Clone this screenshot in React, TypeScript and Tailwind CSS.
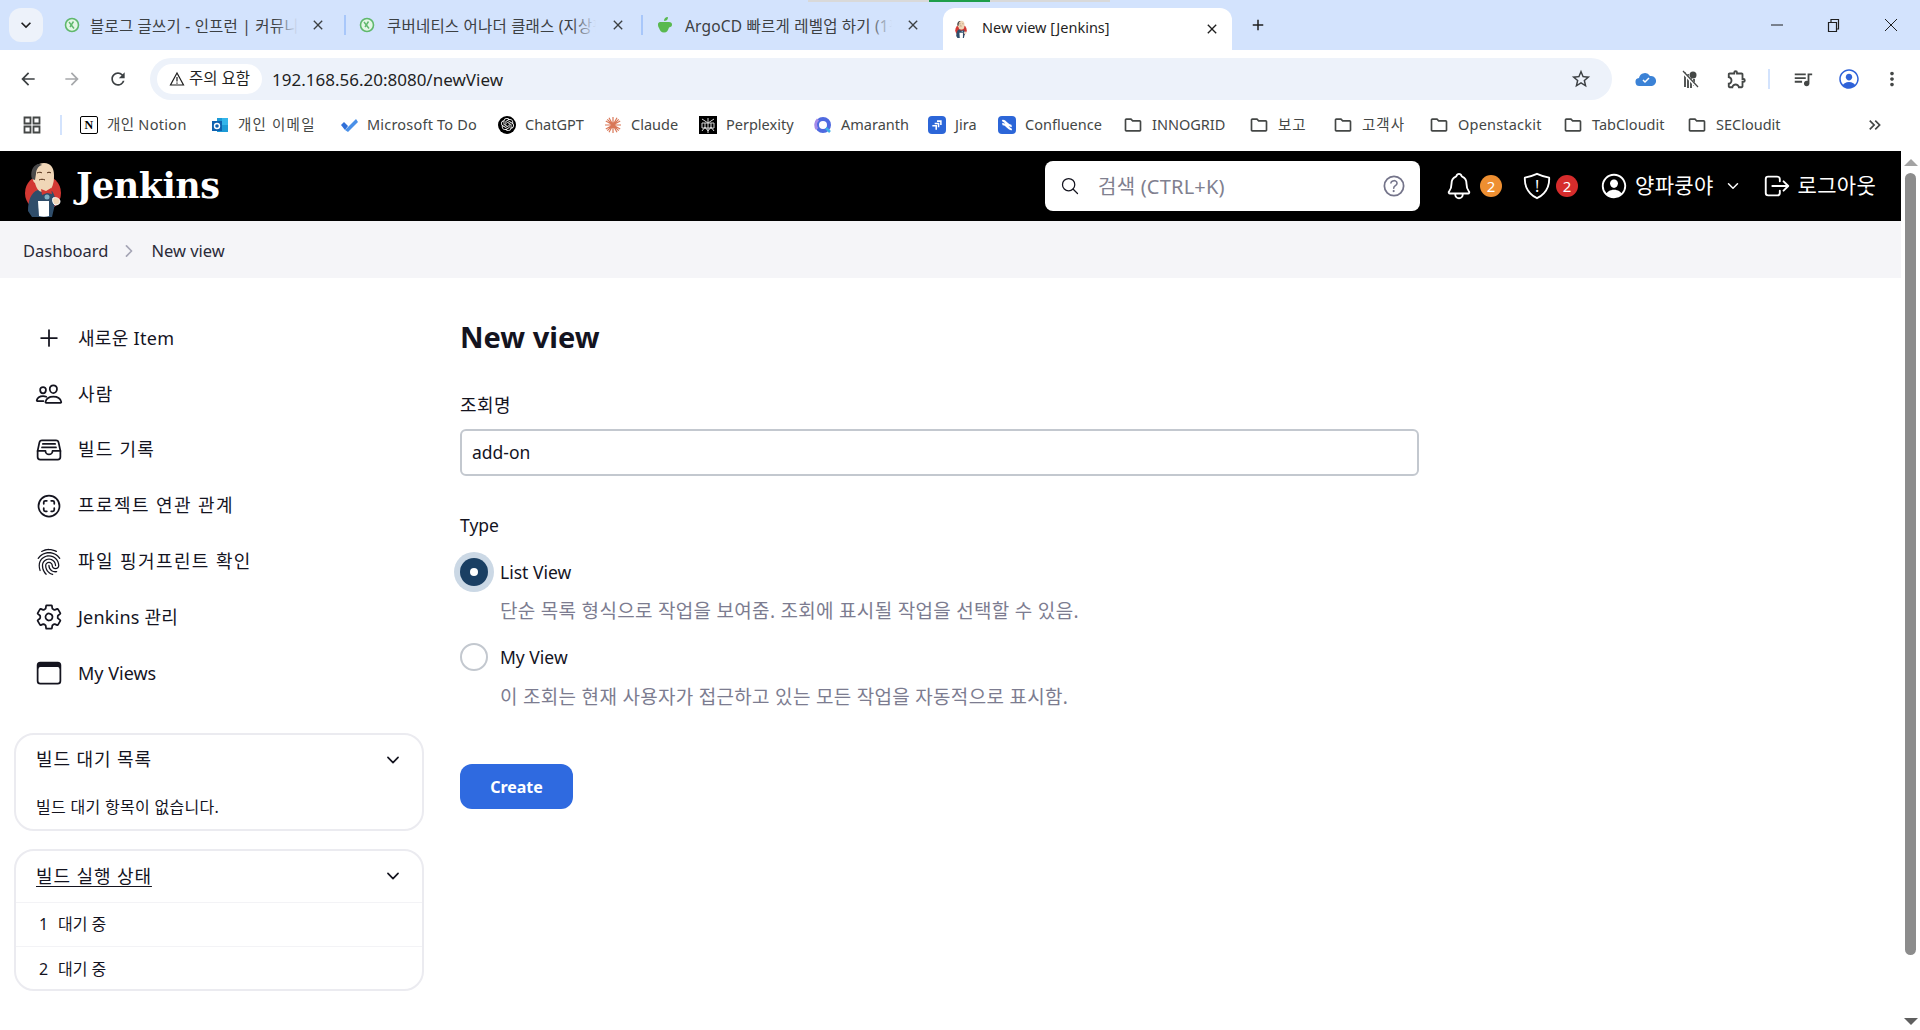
import type { ReactNode } from "react";
import {
  IoAddOutline,
  IoPeopleOutline,
  IoFileTrayFullOutline,
  IoScanCircleOutline,
  IoFingerPrintOutline,
  IoSettingsOutline,
  IoBrowsersOutline,
  IoNotificationsOutline,
  IoShieldOutline,
  IoPersonCircleOutline,
  IoLogOutOutline,
  IoSearchOutline,
  IoHelpCircleOutline,
  IoChevronDown,
  IoChevronForward,
} from "react-icons/io5";
import {
  MdArrowBack,
  MdArrowForward,
  MdRefresh,
  MdStarBorder,
  MdMoreVert,
  MdOutlineExtension,
  MdOutlineFolder,
  MdOutlineQueueMusic,
  MdClose,
  MdAdd,
  MdKeyboardArrowDown,
  MdKeyboardDoubleArrowRight,
} from "react-icons/md";
import { SiOpenai } from "react-icons/si";

function JenkinsLogo({ className }: { className: string }) {
  return (
    <svg viewBox="0 0 50 60" className={className}>
      <circle cx="25" cy="34" r="18" fill="#d33833" />
      <path d="M10 52c0-10 3-19 10-21l14 1c3 4 4 9 3 13l-3 13H14z" fill="#2f4d6a" />
      <path d="M15 14c0-6 5-10 11-10 7 0 10 5 10 12 0 3 0 6-1 9-1 5-5 9-10 8-5 0-7-5-8-9-2-1-3-5-2-10z" fill="#f0d6b7" />
      <path d="M14 20c-2-6 0-13 6-15 2 0 3 0 4 1-4 1-6 5-6 9l-1 6z" fill="#49494a" />
      <path d="M21 21c2-1 4-1 6 0M19 14c2-1 4-1 5 0M29 14c1-1 3-1 4 0" stroke="#49270f" strokeWidth="1" fill="none" />
      <path d="M23 30l5 2 5-3 1 6-5-1-5 2z" fill="#d33833" />
      <path d="M20 42h11v15c-3 1-7 1-10 0z" fill="#fff" />
      <path d="M35 39c3-1 6 0 7 3 0 3-2 4-5 4-2-1-3-5-2-7z" fill="#f0d6b7" stroke="#fff" strokeWidth="1" />
      <circle cx="29" cy="38" r="2.5" fill="#81b0c4" />
    </svg>
  );
}

function InflearnIcon() {
  return (
    <svg viewBox="0 0 16 16" className="w-4 h-4 shrink-0">
      <circle cx="8" cy="8" r="6.5" fill="#e3f6e5" stroke="#5fb86c" strokeWidth="1.6" />
      <path d="M5 5l5 6.5M9.5 4.5L6 10" stroke="#5fb86c" strokeWidth="1.4" fill="none" />
    </svg>
  );
}

function AppleIcon() {
  return (
    <svg viewBox="0 0 18 18" className="w-[18px] h-[18px] shrink-0">
      <path d="M2 8c0-1 1-2 2-2h9c2 0 3 1 3 2.500 0 2-1 2.500-3 3-1 3-2 5-5 5s-4-2-5-4.500C2 11 2 9 2 8z" fill="#59b94f" />
      <path d="M8 5c0-2 1-4 4-4 0 3-2 4-4 4z" fill="#59b94f" />
    </svg>
  );
}

function Tab({ icon, title, gap, titleWidth }: { icon: ReactNode; title: string; gap: string; titleWidth: string }) {
  return (
    <div className={`flex items-center h-full ${gap}`}>
      {icon}
      <div className={`relative overflow-hidden whitespace-nowrap text-[15.5px] tracking-[0.2px] text-[#3c4043] mt-[4px] ${titleWidth}`}>
        {title}
        <span className="absolute inset-y-0 right-0 w-6 bg-gradient-to-r from-transparent to-[#d3e3fd]" />
      </div>
      <MdClose className="w-4 h-4 ml-[2px] text-[#3c4043] shrink-0" />
    </div>
  );
}

function TabStrip() {
  return (
    <div className="relative h-[50px] bg-[#d3e3fd] flex items-center shrink-0">
      <div className="absolute top-0 left-[808px] w-[302px] h-[2px] bg-[#d9d9d9]" />
      <div className="absolute top-0 left-[929px] w-[61px] h-[2px] bg-[#1e9e4a]" />
      <div className="ml-[9px] w-[34px] h-[34px] rounded-[12px] bg-[#edf2fa] flex items-center justify-center shrink-0">
        <MdKeyboardArrowDown className="w-5 h-5 text-[#1f1f1f]" />
      </div>
      <div className="ml-[21px] w-[280px] shrink-0 h-full">
        <Tab icon={<InflearnIcon />} title="블로그 글쓰기 - 인프런 | 커뮤니티" gap="gap-[10px]" titleWidth="w-[208px]" />
      </div>
      <div className="w-[2px] h-[20px] bg-[#a8c7fa] shrink-0" />
      <div className="ml-[13px] w-[282px] shrink-0 h-full">
        <Tab icon={<InflearnIcon />} title="쿠버네티스 어나더 클래스 (지상편)" gap="gap-[12px]" titleWidth="w-[209px]" />
      </div>
      <div className="w-[2px] h-[20px] bg-[#a8c7fa] shrink-0" />
      <div className="ml-[13px] w-[287px] shrink-0 h-full">
        <Tab icon={<AppleIcon />} title="ArgoCD 빠르게 레벨업 하기 (1편)" gap="gap-[11px]" titleWidth="w-[207px]" />
      </div>
      <div className="self-end h-[42px] w-[289px] shrink-0 bg-white rounded-t-[12px] flex items-center pl-[10px]">
        <JenkinsLogo className="w-4 h-5 shrink-0" />
        <span className="ml-[13px] w-[222px] whitespace-nowrap text-[14.5px] text-[#1f1f1f] -mt-[2px]">New view [Jenkins]</span>
        <MdClose className="w-4 h-4 text-[#1f1f1f] shrink-0" />
      </div>
      <MdAdd className="ml-[17px] w-[18px] h-[18px] text-[#1f1f1f] shrink-0" />
      <div className="ml-auto flex items-center text-[#1f1f1f]">
        <svg viewBox="0 0 14 14" className="w-[14px] h-[14px]"><path d="M1 7h12" stroke="currentColor" strokeWidth="1" /></svg>
        <svg viewBox="0 0 14 14" className="ml-[42px] w-[14px] h-[14px]"><path d="M2.500 4.500h8v9h-8zM5 4V1.500h7.500V11H11" stroke="currentColor" fill="none" strokeWidth="1.200" /></svg>
        <svg viewBox="0 0 14 14" className="ml-[44px] mr-[22px] w-[14px] h-[14px]"><path d="M1 1l12 12M13 1L1 13" stroke="currentColor" strokeWidth="1" /></svg>
      </div>
    </div>
  );
}

function Toolbar() {
  return (
    <div className="h-[50px] bg-white flex items-end shrink-0 rounded-t-[10px]">
      <div className="w-[150px] h-[42px] flex items-center shrink-0 text-[#3c4043]">
        <MdArrowBack className="ml-[18px] w-5 h-5" />
        <MdArrowForward className="ml-[24px] w-5 h-5 text-[#a6a8ab]" />
        <MdRefresh className="ml-[26px] w-5 h-5" />
      </div>
      <div className="w-[1462px] h-[42px] rounded-full bg-[#edf2fa] flex items-center shrink-0 pl-[7px] pr-[20px]">
        <div className="w-[105px] h-[30px] rounded-full bg-white flex items-center justify-center gap-[4px] shrink-0">
          <svg viewBox="0 0 16 16" className="w-4 h-4">
            <path d="M8 2l6.500 12h-13zM8 6v4.500M8 11.500v1.200" stroke="#1f1f1f" strokeWidth="1.200" fill="none" />
          </svg>
          <span className="text-[15.5px] text-[#1f1f1f] whitespace-nowrap">주의 요함</span>
        </div>
        <span className="ml-[10px] mt-[1px] text-[17px] text-[#1f1f1f]">192.168.56.20:8080/newView</span>
        <MdStarBorder className="ml-auto w-[22px] h-[22px] text-[#3c4043]" />
      </div>
      <div className="h-[42px] flex items-center text-[#444746]">
        <svg viewBox="0 0 22 16" className="ml-[23px] w-[22px] h-4">
          <path d="M5 15a4 4 0 01-1-8 6 6 0 0111-2 5 5 0 012 10z" fill="#3b82d6" />
          <path d="M8 9l2 2 4-4" stroke="#fff" strokeWidth="1.500" fill="none" />
        </svg>
        <svg viewBox="0 0 20 20" className="ml-[23px] w-5 h-5">
          <circle cx="13" cy="6" r="3.500" fill="#444746" />
          <path d="M5 3v15M8 5v14M11 9v10M14 10v7" stroke="#444746" strokeWidth="1.800" />
          <path d="M2 2l15 16" stroke="#fff" strokeWidth="3" />
          <path d="M3 2l15 16" stroke="#444746" strokeWidth="1.200" />
        </svg>
        <MdOutlineExtension className="ml-[26px] w-[22px] h-[22px]" />
        <div className="ml-[20px] w-[2px] h-[20px] bg-[#d3e3fd]" />
        <MdOutlineQueueMusic className="ml-[22px] w-[22px] h-[22px]" />
        <IoPersonCircleOutline className="ml-[23px] w-[24px] h-[24px] text-[#2f62d8]" />
        <MdMoreVert className="ml-[20px] w-[22px] h-[22px]" />
      </div>
    </div>
  );
}

const BrandSquare = ({ children }: { children: ReactNode }) => (
  <span className="w-[18px] h-[18px] rounded-[4px] bg-[#2c66d8] flex items-center justify-center shrink-0">{children}</span>
);

const bookmarks: { label: string; width: string; icon: ReactNode }[] = [
  {
    label: "개인 Notion",
    width: "w-[131px] tracking-[0.3px]",
    icon: (
      <span className="w-[18px] h-[18px] border-[1.500px] border-black rounded-[2px] bg-white flex items-center justify-center text-[12px] leading-none font-bold font-['Liberation_Serif',serif] text-black shrink-0">N</span>
    ),
  },
  {
    label: "개인 이메일",
    width: "w-[129px] tracking-[1.2px]",
    icon: (
      <svg viewBox="0 0 18 18" className="w-[18px] h-[18px] shrink-0">
        <rect x="6" y="2" width="11" height="14" fill="#1c9ad6" />
        <rect x="11" y="2" width="6" height="7" fill="#33b5ea" />
        <rect x="1" y="5" width="10" height="10" fill="#0f62b0" />
        <circle cx="6" cy="10" r="2.500" fill="none" stroke="#fff" strokeWidth="1.400" />
      </svg>
    ),
  },
  {
    label: "Microsoft To Do",
    width: "w-[158px] tracking-[0.2px]",
    icon: (
      <svg viewBox="0 0 18 18" className="w-[18px] h-[18px] shrink-0">
        <path d="M1 9l3-3 4 4-3 4z" fill="#2f6fd8" />
        <path d="M5 14l11-11 2 3L8 16z" fill="#4a90e8" />
      </svg>
    ),
  },
  {
    label: "ChatGPT",
    width: "w-[106px]",
    icon: (
      <span className="w-[18px] h-[18px] rounded-full bg-black flex items-center justify-center shrink-0">
        <SiOpenai className="w-[13px] h-[13px] text-white" />
      </span>
    ),
  },
  {
    label: "Claude",
    width: "w-[95px]",
    icon: (
      <svg viewBox="0 0 18 18" className="w-[18px] h-[18px] shrink-0">
        <path d="M9 1v16M1 9h16M3.300 3.300l11.400 11.400M14.700 3.300L3.300 14.700M5 1.800l8 14.400M13 1.800L5 16.200M1.800 5l14.400 8M16.200 5L1.800 13" stroke="#d97757" strokeWidth="1.200" />
      </svg>
    ),
  },
  {
    label: "Perplexity",
    width: "w-[115px]",
    icon: (
      <svg viewBox="0 0 18 18" className="w-[18px] h-[18px] shrink-0">
        <rect width="18" height="18" fill="#000" />
        <path d="M3 3l6 4 6-4M3 15l3-4 3 4 3-4 3 4M3 7h12v5H3zM9 2v15M6 7v6M12 7v6" stroke="#d8d8d8" strokeWidth="1" fill="none" />
      </svg>
    ),
  },
  {
    label: "Amaranth",
    width: "w-[114px]",
    icon: (
      <svg viewBox="0 0 18 18" className="w-[18px] h-[18px] shrink-0">
        <circle cx="9" cy="9" r="6" fill="none" stroke="#4f6ae0" strokeWidth="4" />
        <path d="M4 3.500A7.500 7.500 0 003 13" stroke="#a58ae8" strokeWidth="3" fill="none" />
        <path d="M12 12l4 4" stroke="#3fb0e6" strokeWidth="2.500" />
      </svg>
    ),
  },
  {
    label: "Jira",
    width: "w-[70px]",
    icon: (
      <BrandSquare>
        <svg viewBox="0 0 18 18" className="w-[14px] h-[14px]">
          <path d="M9 3h6v6h-2V5H9zM6 6h6v6h-2V8H6zM3 9h6v6H7v-4H3z" fill="#fff" />
        </svg>
      </BrandSquare>
    ),
  },
  {
    label: "Confluence",
    width: "w-[125px]",
    icon: (
      <BrandSquare>
        <svg viewBox="0 0 18 18" className="w-[14px] h-[14px]">
          <path d="M3 4c4-2 6 7 12 6M15 14c-4 2-6-7-12-6" stroke="#fff" strokeWidth="3" fill="none" />
        </svg>
      </BrandSquare>
    ),
  },
  { label: "INNOGRID", width: "w-[126px]", icon: null },
  { label: "보고", width: "w-[84px] tracking-[1px]", icon: null },
  { label: "고객사", width: "w-[96px] tracking-[1px]", icon: null },
  { label: "Openstackit", width: "w-[134px] tracking-[0.2px]", icon: null },
  { label: "TabCloudit", width: "w-[124px]", icon: null },
  { label: "SECloudit", width: "w-[160px]", icon: null },
];

function Bookmarks() {
  return (
    <div className="h-[51px] bg-white flex items-center shrink-0 pb-[2px]">
      <svg viewBox="0 0 18 18" className="ml-[23px] w-[18px] h-[18px] shrink-0">
        <path d="M1.500 1.500h6v6h-6zM10.500 1.500h6v6h-6zM1.500 10.500h6v6h-6zM10.500 10.500h6v6h-6z" fill="none" stroke="#444746" strokeWidth="1.800" />
      </svg>
      <div className="ml-[19px] w-[2px] h-[20px] bg-[#d3e3fd] shrink-0" />
      <div className="ml-[18px] flex items-center">
        {bookmarks.map((b) => (
          <div key={b.label} className={`flex items-center gap-[9px] shrink-0 ${b.width}`}>
            {b.icon ?? <MdOutlineFolder className="w-[20px] h-[20px] text-[#444746] shrink-0" />}
            <span className="text-[14.5px] text-[#444746] whitespace-nowrap">{b.label}</span>
          </div>
        ))}
      </div>
      <MdKeyboardDoubleArrowRight className="ml-[18px] w-5 h-5 text-[#444746]" />
    </div>
  );
}

function Header() {
  return (
    <header className="h-[70px] bg-black flex items-center text-white shrink-0">
      <JenkinsLogo className="ml-[18px] mt-[6px] w-[50px] h-[60px] shrink-0" />
      <span className="ml-[8px] text-[35px] font-bold font-['DejaVu_Serif',serif] tracking-[-0.5px]">Jenkins</span>
      <div className="ml-auto w-[375px] h-[50px] rounded-[8px] bg-white flex items-center pl-[15px] pr-[12px] shrink-0">
        <IoSearchOutline className="w-5 h-5 text-[#14141f]" />
        <span className="ml-[18px] mt-[1px] text-[20px] tracking-[0.2px] text-[#80808f]">검색 (CTRL+K)</span>
        <IoHelpCircleOutline className="ml-auto w-[28px] h-[28px] text-[#74748a]" />
      </div>
      <IoNotificationsOutline className="ml-[24px] w-[30px] h-[30px] shrink-0" />
      <span className="ml-[6px] w-[22px] h-[22px] rounded-full bg-[#ee8f31] flex items-center justify-center text-[15px]">2</span>
      <div className="relative ml-[20px] w-[30px] h-[30px] shrink-0">
        <IoShieldOutline className="w-[30px] h-[30px]" />
        <span className="absolute inset-0 flex items-center justify-center text-[16px] leading-none">!</span>
      </div>
      <span className="ml-[4px] w-[22px] h-[22px] rounded-full bg-[#d62c2c] flex items-center justify-center text-[15px]">2</span>
      <IoPersonCircleOutline className="ml-[21px] w-[30px] h-[30px] shrink-0" />
      <span className="ml-[6px] text-[21px] tracking-[0.3px] whitespace-nowrap">양파쿵야</span>
      <IoChevronDown className="ml-[11px] w-[16px] h-[16px]" />
      <IoLogOutOutline className="ml-[21px] w-[30px] h-[30px] shrink-0" />
      <span className="ml-[6px] mr-[25px] text-[21px] tracking-[0.3px] whitespace-nowrap">로그아웃</span>
    </header>
  );
}

const tasks = [
  { label: "새로운 Item", icon: IoAddOutline, spacing: "tracking-[0.3px]" },
  { label: "사람", icon: IoPeopleOutline, spacing: "tracking-[1.2px]" },
  { label: "빌드 기록", icon: IoFileTrayFullOutline, spacing: "tracking-[1.2px]" },
  { label: "프로젝트 연관 관계", icon: IoScanCircleOutline, spacing: "tracking-[1.4px]" },
  { label: "파일 핑거프린트 확인", icon: IoFingerPrintOutline, spacing: "tracking-[1.4px]" },
  { label: "Jenkins 관리", icon: IoSettingsOutline, spacing: "tracking-[0.2px]" },
  { label: "My Views", icon: IoBrowsersOutline, spacing: "" },
];

function Sidebar() {
  return (
    <aside className="w-[410px] ml-[14px] pt-[32.5px] shrink-0">
      {tasks.map((t) => {
        const Icon = t.icon;
        return (
          <div key={t.label} className="h-[55.8px] flex items-center pl-[21px] text-[#14141f]">
            <Icon className="w-[28px] h-[28px] shrink-0" />
            <span className={`ml-[15px] text-[18px] whitespace-nowrap ${t.spacing}`}>{t.label}</span>
          </div>
        );
      })}
      <section className="mt-[31.5px] h-[98px] rounded-[20px] border-2 border-[#ebebf0]">
        <div className="h-[50px] flex items-center pl-[20px] pr-[20px] text-[#14141f]">
          <span className="text-[18px] tracking-[0.9px]">빌드 대기 목록</span>
          <IoChevronDown className="ml-auto w-[18px] h-[18px]" />
        </div>
        <div className="pl-[20px] mt-[12px] text-[16px] tracking-[0.3px] leading-[20px] text-[#14141f]">빌드 대기 항목이 없습니다.</div>
      </section>
      <section className="mt-[18px] h-[142px] rounded-[20px] border-2 border-[#ebebf0]">
        <div className="h-[52px] flex items-center pl-[20px] pr-[20px] text-[#14141f] border-b border-[#f3f3f6]">
          <span className="text-[18px] tracking-[0.9px] underline underline-offset-[3px]">빌드 실행 상태</span>
          <IoChevronDown className="ml-auto w-[18px] h-[18px]" />
        </div>
        {["1", "2"].map((n, i) => (
          <div key={n} className={`h-[44px] flex items-center pl-[23px] text-[16px] text-[#14141f] ${i === 0 ? "border-b border-[#f3f3f6]" : ""}`}>
            <span className="w-[19px]">{n}</span>
            <span>대기 중</span>
          </div>
        ))}
      </section>
    </aside>
  );
}

function NewViewForm() {
  return (
    <main className="ml-[36px] w-[959px] pt-[38px] text-[#14141f] shrink-0">
      <h1 className="text-[29px] leading-[42px] font-bold">New view</h1>
      <label className="block mt-[34px] text-[18px] tracking-[0.4px] leading-[26px]">조회명</label>
      <div className="mt-[11px] h-[47px] rounded-[6px] border-2 border-[#c3c8cf] flex items-center pl-[10px] text-[17.5px]">add-on</div>
      <div className="mt-[36px] text-[17.5px] leading-[26px]">Type</div>

      <div className="mt-[20px] h-[28px] flex items-center">
        <span className="w-[28px] h-[28px] rounded-full bg-[#1a3f63] flex items-center justify-center shadow-[0_0_0_6px_#cbd8e5] shrink-0">
          <span className="w-[8px] h-[8px] rounded-full bg-white" />
        </span>
        <span className="ml-[12px] text-[17.5px]">List View</span>
      </div>
      <p className="mt-[11px] ml-[40px] text-[19px] tracking-[0.3px] leading-[28px] text-[#7c7c90]">단순 목록 형식으로 작업을 보여줌. 조회에 표시될 작업을 선택할 수 있음.</p>

      <div className="mt-[18px] h-[28px] flex items-center">
        <span className="w-[28px] h-[28px] rounded-full border-2 border-[#c3c8cf] bg-white shrink-0" />
        <span className="ml-[12px] text-[17.5px]">My View</span>
      </div>
      <p className="mt-[12px] ml-[40px] text-[19px] tracking-[0.3px] leading-[28px] text-[#7c7c90]">이 조회는 현재 사용자가 접근하고 있는 모든 작업을 자동적으로 표시함.</p>

      <button className="mt-[53px] w-[113px] h-[45px] rounded-[12px] bg-[#2f6ae0] text-white text-[16px] font-bold">Create</button>
    </main>
  );
}

function Scrollbar() {
  return (
    <div className="w-[19px] bg-white flex flex-col items-center shrink-0">
      <span className="mt-[8px] w-0 h-0 border-x-[7px] border-x-transparent border-b-[7px] border-b-[#a3a3a3]" />
      <div className="mt-[7px] w-[11px] h-[782px] rounded-full bg-[#8c8c8c]" />
      <span className="mt-auto mb-[5px] w-0 h-0 border-x-[7px] border-x-transparent border-t-[7px] border-t-[#5f5f5f]" />
    </div>
  );
}

export default function App() {
  return (
    <div className="w-[1920px] h-[1030px] overflow-hidden flex flex-col bg-white font-['Noto_Sans','Noto_Sans_CJK_KR',sans-serif]">
      <TabStrip />
      <Toolbar />
      <Bookmarks />
      <div className="flex-1 flex min-h-0">
        <div className="w-[1901px] flex flex-col shrink-0">
          <Header />
          <nav className="h-[57px] bg-[#f5f5f8] flex items-center pl-[23px] pt-[3px] text-[16.5px] text-[#2b2b38] shrink-0">
            <span>Dashboard</span>
            <IoChevronForward className="ml-[12px] w-[18px] h-[18px] text-[#a5a5b5]" />
            <span className="ml-[13px]">New view</span>
          </nav>
          <div className="flex">
            <Sidebar />
            <NewViewForm />
          </div>
        </div>
        <Scrollbar />
      </div>
    </div>
  );
}
